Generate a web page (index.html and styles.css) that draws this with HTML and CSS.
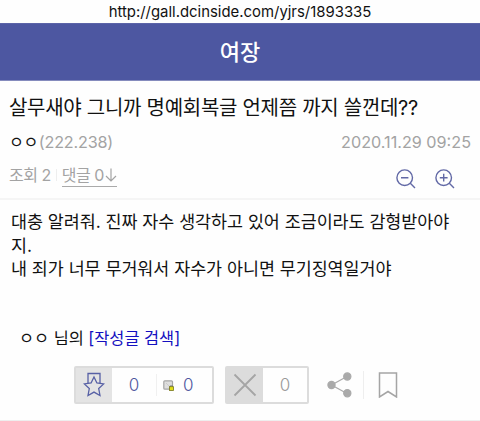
FILE: index.html
```html
<!DOCTYPE html>
<html lang="ko">
<head>
    <meta charset="UTF-8">
    <meta name="viewport" content="width=device-width, initial-scale=1.0">
    <title>여장 갤러리</title>
    <link rel="stylesheet" href="styles.css">
</head>
<body>
    <div class="url-bar"><span>http://gall.dcinside.com/yjrs/1893335</span></div>

    <header class="header">
        <h1>여장</h1>
    </header>

    <!-- 글 정보 -->
    <section class="post-head">
        <h2><span>살무새야 그니까 명예회복글 언제쯤 까지 쓸껀데??</span></h2>
        <div class="meta">
            <div><span class="nick">ㅇㅇ</span><span class="ip">(222.238)</span></div>
            <span class="date">2020.11.29 09:25</span>
        </div>
        <div class="tools">
            <div class="counts">
                <span class="views">조회 2</span>
                <a class="comments"><span>댓글 0</span><svg width="12" height="14" viewBox="0 0 12 14"><path d="M6 0.5V13M1 8l5 5 5-5"/></svg></a>
            </div>
            <div class="zoom">
                <svg width="20" height="20" viewBox="0 0 20 20"><circle cx="8.7" cy="8.7" r="7.8"/><path d="M5 8.7h7.4M14.3 14.3l4.7 4.7"/></svg>
                <svg width="20" height="20" viewBox="0 0 20 20"><circle cx="8.7" cy="8.7" r="7.8"/><path d="M4.8 8.7h7.8M8.7 4.8v7.8M14.3 14.3l4.7 4.7"/></svg>
            </div>
        </div>
    </section>

    <!-- 본문 -->
    <section class="post-body">
        <p>대충 알려줘. 진짜 자수 생각하고 있어 조금이라도 감형받아야</p>
        <p>지.</p>
        <p>내 죄가 너무 무거워서 자수가 아니면 무기징역일거야</p>
        <p class="writer">ㅇㅇ 님의 <a>[작성글 검색]</a></p>
    </section>

    <!-- 추천 / 비추천 / 공유 -->
    <section class="actions">
        <div class="vote up">
            <span class="vote-icon">
                <svg width="22" height="26" viewBox="0 0 22 26"><path d="M5 11V1.500h12V11"/><path class="star" d="M11 5l2.900 6 6.800.900-5 4.700 1.300 6.900-6-3.400-6 3.400 1.300-6.900-5-4.700 6.800-.9z"/></svg>
            </span>
            <span class="num">0</span>
            <span class="fixed">
                <svg width="11" height="11" viewBox="0 0 11 11"><rect x=".8" y=".8" width="8.7" height="8.4" rx="1" fill="#dedede" stroke="#a5a5a5" stroke-width="1.2"/><path d="M3 3l4.5 4.5" stroke="#cacaca"/><path d="M7.3 7V5.8h2.2V7" fill="none" stroke="#777" stroke-width=".8"/><rect x="6.5" y="6.7" width="4" height="3.8" fill="#e0dd18" stroke="#75751d" stroke-width=".8"/></svg>
                <span>0</span>
            </span>
        </div>
        <div class="vote down">
            <span class="vote-icon">
                <svg width="24" height="24" viewBox="0 0 24 24"><path d="M1.5 1.5l21 21M22.5 1.5l-21 21"/></svg>
            </span>
            <span class="num">0</span>
        </div>
        <svg class="share" width="25" height="26" viewBox="0 0 25 26"><path d="M20 4.5L4.5 13 20 21.5"/><circle cx="4.5" cy="13" r="3.6"/><circle cx="20.3" cy="4.5" r="3.6"/><circle cx="20.3" cy="21.2" r="3.6"/></svg>
        <span class="divider"></span>
        <svg class="bookmark" width="20" height="26" viewBox="0 0 20 26"><path d="M1.5 1h17v24L10 19.5 1.5 25z"/></svg>
    </section>
</body>
</html>
```

FILE: styles.css
```css
* {
    margin: 0;
    padding: 0;
    box-sizing: border-box;
}

body {
    font-family: Inter, "Noto Sans CJK KR", sans-serif;
    background: #fefefe;
    color: #111;
    white-space: nowrap;
    overflow: hidden;
}

svg {
    display: block;
    flex-shrink: 0;
    fill: none;
}

.url-bar {
    height: 23px;
    line-height: 24px;
    text-align: center;
    font-size: 14.9px;
}

.header {
    height: 58px;
    background: #4d57a1;
    border-top: 1px solid #5c64a8;
    border-bottom: 1px solid #858bbd;
    color: white;
    text-align: center;
}

.header h1 {
    font-size: 22px;
    font-weight: 500;
    line-height: 56px;
}

/* 글 정보 */
.post-head {
    height: 119px;
    padding: 12px 9px 0;
    border-bottom: 2px solid #f5f5f5;
}

.post-head h2 {
    font-size: 20px;
    font-weight: 400;
    line-height: 30px;
    letter-spacing: -0.28px;
}

.meta {
    display: flex;
    justify-content: space-between;
    height: 39px;
    line-height: 39px;
    font-size: 16.2px;
    color: #a3a3a3;
}

.nick {
    color: #111;
    letter-spacing: -0.5px;
    margin-right: 1px;
}

.ip {
    letter-spacing: -0.2px;
}

.tools {
    display: flex;
    justify-content: space-between;
    padding-right: 16px;
}

.counts {
    display: flex;
    height: 26px;
    line-height: 26px;
    font-size: 16px;
    letter-spacing: -0.5px;
    color: #a3a3a3;
}

.views {
    margin-right: 5px;
}

.comments {
    display: flex;
    align-items: center;
    gap: 1px;
    height: 26px;
    padding-left: 6px;
    background: linear-gradient(#eee, #eee) 0 7px / 1px 12px no-repeat, linear-gradient(#aaa, #aaa) 6px 24px / 100% 1px no-repeat;
}

.comments svg {
    stroke: #a3a3a3;
    stroke-width: 1.2;
}

.zoom {
    display: flex;
    gap: 19px;
    padding-top: 7px;
}

.zoom svg {
    stroke: #6269a6;
    stroke-width: 1.4;
}

/* 본문 */
.post-body {
    height: 166px;
    padding: 10px 11px 0;
    font-size: 17.4px;
    letter-spacing: -0.03px;
    line-height: 23.5px;
}

.writer {
    padding: 46px 8px 0;
    font-size: 16.4px;
}

.writer a {
    color: #1410c0;
}

/* 추천 / 비추천 / 공유 */
.actions {
    display: flex;
    align-items: center;
    height: 55px;
    padding: 0 0 16px 74px;
    border-bottom: 1px solid #eee;
}

.vote {
    display: flex;
    align-items: center;
    height: 38px;
    border: 2px solid #dcdcdc;
    border-radius: 2px;
    font-size: 17px;
    font-weight: 300;
}

.up {
    width: 140px;
    margin-right: 11px;
    color: #4f579e;
}

.down {
    width: 84px;
    margin-right: 18px;
    color: #999;
}

.vote-icon {
    display: flex;
    align-items: center;
    justify-content: center;
    width: 36px;
    height: 100%;
    background: #e4e4e4;
}

.up .vote-icon svg {
    stroke: #5760a5;
    stroke-width: 1.3;
}

/* the star covers the ribbon ends */
.star {
    fill: #e4e4e4;
}

.down .vote-icon {
    background: #dcdcdc;
}

.down svg {
    stroke: #a5a5a5;
    stroke-width: 1.8;
}

.num {
    flex: 1;
    text-align: center;
}

.fixed {
    display: flex;
    align-items: center;
    gap: 9px;
    width: 56px;
    height: 22px;
    padding-left: 6px;
    border-left: 1px solid #f0f0f0;
}

.share {
    fill: #aaa;
    stroke: #aaa;
    stroke-width: 1.2;
}

.share path {
    fill: none;
}

.divider {
    width: 1px;
    height: 28px;
    margin: 0 14px 0 11px;
    background: #eee;
}

.bookmark {
    stroke: #a5a5a5;
    stroke-width: 1.5;
}
```
